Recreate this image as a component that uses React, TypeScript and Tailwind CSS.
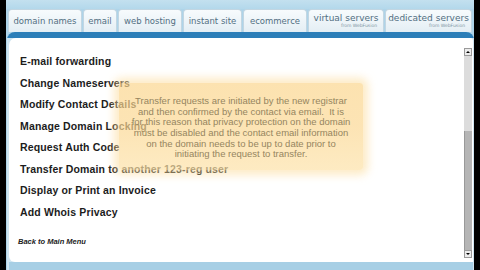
import React from "react";

const tabs = [
  { label: "domain names", w: "w-[74px]" },
  { label: "email", w: "w-[34px]" },
  { label: "web hosting", w: "w-[64px]" },
  { label: "instant site", w: "w-[59px]" },
  { label: "ecommerce", w: "w-[64px]" },
];

const links = [
  "E-mail forwarding",
  "Change Nameservers",
  "Modify Contact Details",
  "Manage Domain Locking",
  "Request Auth Code",
  "Transfer Domain to another 123-reg user",
  "Display or Print an Invoice",
  "Add Whois Privacy",
];

const tip = [
  "Transfer requests are initiated by the new registrar",
  "and then confirmed by the contact via email.  It is",
  "for this reason that privacy protection on the domain",
  "must be disabled and the contact email information",
  "on the domain needs to be up to date prior to",
  "initiating the request to transfer.",
];

export default function App() {
  return (
    <div className="w-[480px] h-[270px] bg-black flex overflow-hidden">
      <div className="w-[6px] shrink-0" />
      <div className="flex-1 bg-[#aed4e9] flex flex-col">
        {/* Tabs */}
        <div className="h-[9px] bg-gradient-to-b from-[#c3e0ef] to-[#b3d8eb]" />
        <div className="h-[23px] flex pl-[2px] font-['DejaVu_Sans',sans-serif] text-[#526f82] whitespace-nowrap">
          {tabs.map((t) => (
            <div
              key={t.label}
              className={`${t.w} mr-[1px] rounded-t-[4px] border-x border-t border-[#c2d6e2] bg-gradient-to-b from-[#f7fbfd] to-[#e4eef4] flex items-center justify-center text-[8.5px]`}
            >
              {t.label}
            </div>
          ))}
          <div className="w-[76px] mr-[1px] rounded-t-[4px] border-x border-t border-[#c2d6e2] bg-gradient-to-b from-[#f7fbfd] to-[#e4eef4] flex flex-col items-center justify-center leading-none">
            <span className="text-[9px]">virtual servers</span>
            <span className="text-[4.5px] self-end mr-[6px] mt-[1px] text-[#7f95a3]">from WebFusion</span>
          </div>
          <div className="flex-1 mr-[2px] rounded-t-[4px] border-x border-t border-[#c2d6e2] bg-gradient-to-b from-[#f7fbfd] to-[#e4eef4] flex flex-col items-center justify-center leading-none">
            <span className="text-[9px]">dedicated servers</span>
            <span className="text-[4.5px] self-end mr-[6px] mt-[1px] text-[#7f95a3]">from WebFusion</span>
          </div>
        </div>

        {/* Panel */}
        <div className="flex-1 ml-[1px] rounded-t-[8px] bg-[#2c7eb8] pt-[6px] flex flex-col">
          <div className="flex-1 bg-[#cfe5f1] pl-[2px] pr-[1px] flex flex-col">
            <div className="relative flex-1 bg-white rounded-tl-[7px] rounded-tr-[3px] rounded-bl-[6px] flex">
              <div className="flex-1 pt-[13px] pl-[11px] font-['Liberation_Sans',Arial,sans-serif]">
                <ul className="flex flex-col">
                  {links.map((l) => (
                    <li key={l} className="h-[21.6px] flex items-center text-[10.5px] font-bold text-[#1c1c1c] tracking-[0.15px]">
                      {l}
                    </li>
                  ))}
                </ul>
                <div className="mt-[12px] -ml-[2px] text-[7.5px] font-bold italic text-[#222]">Back to Main Menu</div>
              </div>

              {/* Scrollbar */}
              <div className="w-[8px] mt-[10px] mb-[4px] mr-[1px] flex flex-col bg-[#b8b8b8]">
                <div className="h-[8px] bg-[#ececec] border border-[#9a9a9a] flex items-center justify-center">
                  <div className="w-0 h-0 border-x-[2px] border-x-transparent border-b-[2px] border-b-black" />
                </div>
                <div className="h-[75px] bg-[#dcdcdc]" />
                <div className="flex-1 bg-[#b5b5b5] border-l border-[#999]" />
                <div className="h-[8px] bg-[#ececec] border border-[#9a9a9a] flex items-center justify-center">
                  <div className="w-0 h-0 border-x-[2px] border-x-transparent border-t-[2px] border-t-black" />
                </div>
              </div>

              {/* Tooltip */}
              <div className="absolute left-[110px] top-[45px] w-[244px] h-[87px] rounded-[3px] bg-gradient-to-b from-[#fbd68e]/70 via-[#fbd894]/70 to-[#fde2a8]/70 shadow-[0_0_8px_5px_rgba(252,222,160,0.6)] flex flex-col items-center justify-center pt-[3px] font-['Liberation_Sans',Arial,sans-serif] text-[9.5px] leading-[10.6px] text-[#95855f]">
                {tip.map((t) => (
                  <div key={t} className="whitespace-pre">{t}</div>
                ))}
              </div>
            </div>
            <div className="h-[8px] bg-[#a7cfe5]" />
          </div>
        </div>
      </div>
      <div className="w-[6px] shrink-0" />
    </div>
  );
}
